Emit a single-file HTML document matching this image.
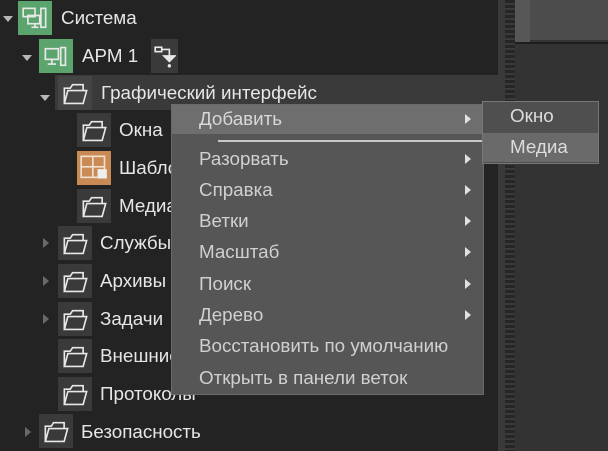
<!DOCTYPE html>
<html><head><meta charset="utf-8"><style>
body{margin:0;width:608px;height:451px;background:#232323;overflow:hidden;position:relative;font-family:"Segoe UI","Liberation Sans","DejaVu Sans",sans-serif;}
.a{position:absolute}
.t{position:absolute;color:#e6e6e6;font-size:18.8px;line-height:22px;white-space:nowrap}
.box{position:absolute;width:34px;height:34px;background:#3a3a3a}
.box svg{position:absolute;left:4px;top:5px}
.tri{position:absolute;width:0;height:0}
.dn{border-left:5px solid transparent;border-right:5px solid transparent;border-top:6px solid #b8b8b8}
.rt{border-top:5px solid transparent;border-bottom:5px solid transparent;border-left:6px solid #6a6a6a}
.m{position:absolute;left:199px;color:#d0d0d0;font-size:18.8px;line-height:22px;white-space:nowrap}
.ar{position:absolute;left:465px;border-top:5px solid transparent;border-bottom:5px solid transparent;border-left:6px solid #e0e0e0}
</style></head><body>
<div class="a" style="left:498px;top:0;width:7px;height:451px;background:#3a3a3a"></div>
<div class="a" style="left:505px;top:0;width:10px;height:451px;background:repeating-linear-gradient(180deg,#262626 0 3px,#3a3a3a 3px 5px)"></div>
<div class="a" style="left:515px;top:0;width:93px;height:451px;background:#333"></div>
<div class="a" style="left:515px;top:0;width:15px;height:42px;background:#575757"></div>
<div class="a" style="left:530px;top:0;width:78px;height:40px;background:#4c4c4c"></div>
<div class="a" style="left:515px;top:42px;width:93px;height:2px;background:#1e1e1e"></div>

<div class="a" style="left:55px;top:75px;width:443px;height:35px;background:#3a3a3a"></div>

<svg width="0" height="0" style="position:absolute"><defs><g id="f"><path d="M2 19V6h5l2-3h9v5" /><path d="M2 19l3-11h16l-3 11z"/></g></defs></svg>

<div class="tri dn" style="left:3px;top:16px"></div>
<div class="box" style="left:18px;top:1px;background:#5ba46e">
<svg width="26" height="26" viewBox="0 0 22 22" fill="none" stroke="#e8e8e8" stroke-width="1.4"><rect x="1" y="2" width="10" height="7"/><rect x="5" y="8" width="10" height="7"/><path d="M8 18h6M11 15v3"/><rect x="16" y="2" width="4" height="16"/></svg></div>
<div class="t" style="left:61px;top:7px">Система</div>

<div class="tri dn" style="left:22px;top:55px"></div>
<div class="box" style="left:39px;top:39px;background:#5ba46e">
<svg width="26" height="26" viewBox="0 0 22 22" fill="none" stroke="#e8e8e8" stroke-width="1.4"><rect x="2" y="4" width="11" height="9"/><path d="M4 17h7M7.5 13v4"/><rect x="15" y="3" width="4" height="15"/></svg></div>
<div class="t" style="left:82px;top:45px">АРМ 1</div>
<div class="box" style="left:151px;top:39px;width:27px">
<svg width="22" height="24" viewBox="0 0 20 22" fill="none" stroke="#e8e8e8" stroke-width="1.5" style="left:3px"><rect x="1" y="3" width="6" height="4"/><path d="M7 5h7v6"/><path d="M9 11h10l-5 5z" fill="#e8e8e8"/><circle cx="14" cy="20" r="0.8" fill="#e8e8e8"/></svg></div>

<div class="tri dn" style="left:40px;top:95px"></div>
<div class="box" style="left:58px;top:76px;background:#444"><svg width="27" height="25" viewBox="0 0 23 21" fill="none" stroke="#e8e8e8" stroke-width="1.4"><use href="#f"/></svg></div>
<div class="t" style="left:101px;top:82px">Графический интерфейс</div>

<div class="box" style="left:77px;top:113px"><svg width="27" height="25" viewBox="0 0 23 21" fill="none" stroke="#e8e8e8" stroke-width="1.4"><use href="#f"/></svg></div>
<div class="t" style="left:119px;top:119px">Окна</div>
<div class="box" style="left:77px;top:151px;background:#c98a55"><svg width="28" height="26" viewBox="0 0 24 22" fill="none" stroke="#f0e0d0" stroke-width="1.4" style="left:3px;top:4px"><rect x="1" y="1" width="20" height="18"/><path d="M11 1v18M1 10h20"/><rect x="15" y="12" width="8" height="8" fill="#eee" stroke="none"/></svg></div>
<div class="t" style="left:119px;top:157px">Шаблоны</div>
<div class="box" style="left:77px;top:189px"><svg width="27" height="25" viewBox="0 0 23 21" fill="none" stroke="#e8e8e8" stroke-width="1.4"><use href="#f"/></svg></div>
<div class="t" style="left:119px;top:195px">Медиа</div>

<div class="tri rt" style="left:43px;top:238px"></div>
<div class="box" style="left:58px;top:226px"><svg width="27" height="25" viewBox="0 0 23 21" fill="none" stroke="#e8e8e8" stroke-width="1.4"><use href="#f"/></svg></div>
<div class="t" style="left:100px;top:232px">Службы</div>
<div class="tri rt" style="left:43px;top:276px"></div>
<div class="box" style="left:58px;top:264px"><svg width="27" height="25" viewBox="0 0 23 21" fill="none" stroke="#e8e8e8" stroke-width="1.4"><use href="#f"/></svg></div>
<div class="t" style="left:100px;top:270px">Архивы</div>
<div class="tri rt" style="left:43px;top:314px"></div>
<div class="box" style="left:58px;top:302px"><svg width="27" height="25" viewBox="0 0 23 21" fill="none" stroke="#e8e8e8" stroke-width="1.4"><use href="#f"/></svg></div>
<div class="t" style="left:100px;top:308px">Задачи</div>
<div class="box" style="left:58px;top:339px"><svg width="27" height="25" viewBox="0 0 23 21" fill="none" stroke="#e8e8e8" stroke-width="1.4"><use href="#f"/></svg></div>
<div class="t" style="left:100px;top:345px">Внешние</div>
<div class="box" style="left:58px;top:377px"><svg width="27" height="25" viewBox="0 0 23 21" fill="none" stroke="#e8e8e8" stroke-width="1.4"><use href="#f"/></svg></div>
<div class="t" style="left:100px;top:383px">Протоколы</div>
<div class="tri rt" style="left:25px;top:427px"></div>
<div class="box" style="left:39px;top:414px"><svg width="27" height="25" viewBox="0 0 23 21" fill="none" stroke="#e8e8e8" stroke-width="1.4"><use href="#f"/></svg></div>
<div class="t" style="left:81px;top:421px">Безопасность</div>

<div class="a" style="left:171px;top:104px;width:311px;height:289px;background:#565656;border:1px solid #6a6a6a"></div>
<div class="a" style="left:172px;top:105px;width:310px;height:29px;background:#6e6e6e"></div>
<div class="a" style="left:218px;top:140px;width:264px;height:2px;background:#c8c8c8"></div>
<div class="m" style="top:108px;color:#d8d8d8">Добавить</div><div class="ar" style="top:114px"></div>
<div class="m" style="top:148px">Разорвать</div><div class="ar" style="top:154px"></div>
<div class="m" style="top:179px">Справка</div><div class="ar" style="top:185px"></div>
<div class="m" style="top:210px">Ветки</div><div class="ar" style="top:216px"></div>
<div class="m" style="top:241px">Масштаб</div><div class="ar" style="top:247px"></div>
<div class="m" style="top:273px">Поиск</div><div class="ar" style="top:279px"></div>
<div class="m" style="top:304px">Дерево</div><div class="ar" style="top:310px"></div>
<div class="m" style="top:335px">Восстановить по умолчанию</div>
<div class="m" style="top:367px">Открыть в панели веток</div>

<div class="a" style="left:482px;top:101px;width:115px;height:61px;background:#4f4f4f;border:1px solid #777"></div>
<div class="a" style="left:483px;top:133px;width:115px;height:29px;background:#6a6a6a"></div>
<div class="m" style="left:510px;top:105px;color:#ddd">Окно</div>
<div class="m" style="left:510px;top:136px;color:#ddd">Медиа</div>
</body></html>
